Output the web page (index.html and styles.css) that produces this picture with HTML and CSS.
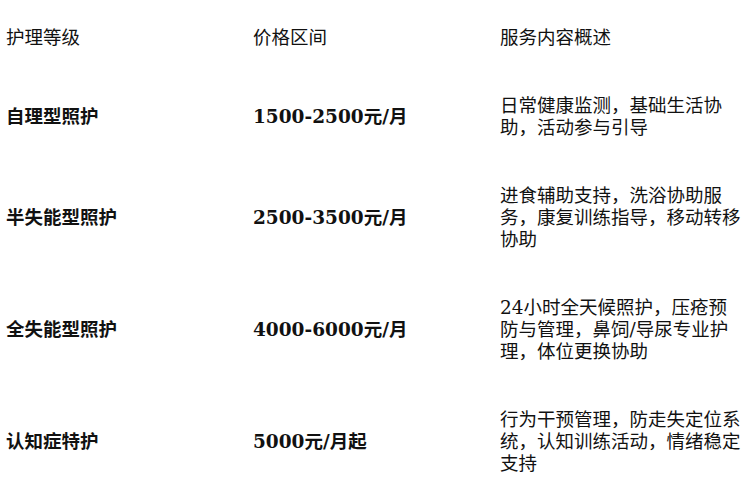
FILE: index.html
```html
<!DOCTYPE html>
<html lang="zh-CN">
<head>
<meta charset="utf-8">
<title>护理等级价格</title>
<link rel="stylesheet" href="styles.css">
</head>
<body>
<table class="care-table">
  <colgroup>
    <col class="col-level">
    <col class="col-price">
    <col class="col-desc">
  </colgroup>
  <thead>
    <tr>
      <th>护理等级</th>
      <th>价格区间</th>
      <th>服务内容概述</th>
    </tr>
  </thead>
  <tbody>
    <tr>
      <td class="level">自理型照护</td>
      <td class="price">1500-2500元/月</td>
      <td class="desc">日常健康监测，基础生活协助，活动参与引导</td>
    </tr>
    <tr>
      <td class="level">半失能型照护</td>
      <td class="price">2500-3500元/月</td>
      <td class="desc">进食辅助支持，洗浴协助服务，康复训练指导，移动转移协助</td>
    </tr>
    <tr>
      <td class="level">全失能型照护</td>
      <td class="price">4000-6000元/月</td>
      <td class="desc">24小时全天候照护，压疮预防与管理，鼻饲/导尿专业护理，体位更换协助</td>
    </tr>
    <tr>
      <td class="level">认知症特护</td>
      <td class="price">5000元/月起</td>
      <td class="desc">行为干预管理，防走失定位系统，认知训练活动，情绪稳定支持</td>
    </tr>
  </tbody>
</table>
</body>
</html>
```
FILE: styles.css
```css
html, body {
  margin: 0;
  padding: 0;
  background: #ffffff;
}

body {
  padding-top: 4px;
  font-family: "DejaVu Serif", "Noto Sans CJK SC", serif;
  font-size: 18.5px;
  line-height: 22px;
  color: #111111;
}

.care-table {
  width: 750px;
  table-layout: fixed;
  border-collapse: collapse;
  border-spacing: 0;
}

.col-level { width: 247px; }
.col-price { width: 247px; }
.col-desc { width: 256px; }

.care-table th,
.care-table td {
  padding: 23px 8px 23px 6px;
  text-align: left;
  vertical-align: middle;
  line-height: 22px;
}

.care-table th {
  font-weight: 400;
}

.level,
.price {
  font-weight: 700;
}

.desc {
  font-weight: 400;
}
```
